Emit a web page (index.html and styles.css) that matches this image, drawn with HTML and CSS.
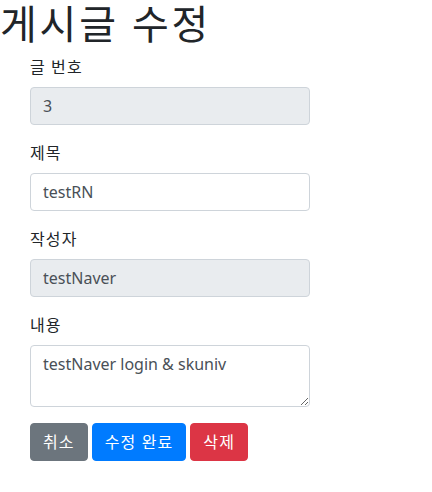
FILE: index.html
```html
<!DOCTYPE html>
<html lang="ko">
<head>
<meta charset="utf-8">
<link rel="stylesheet" href="styles.css">
</head>
<body>
<h1 class="title">게시글 수정</h1>
<form class="form">
  <div class="group">
    <label class="label">글 번호</label>
    <input class="control" type="text" value="3" disabled>
  </div>
  <div class="group">
    <label class="label">제목</label>
    <input class="control" type="text" value="testRN">
  </div>
  <div class="group">
    <label class="label">작성자</label>
    <input class="control" type="text" value="testNaver" disabled>
  </div>
  <div class="group">
    <label class="label">내용</label>
    <textarea class="control area" rows="2">testNaver login &amp; skuniv</textarea>
  </div>
  <div class="buttons">
    <button type="button" class="btn secondary">취소</button>
    <button type="button" class="btn primary">수정 완료</button>
    <button type="button" class="btn danger">삭제</button>
  </div>
</form>
</body>
</html>
```
FILE: styles.css
```css
body {
  margin: 0;
  font-family: "Noto Sans", "Noto Sans CJK KR", sans-serif;
  font-size: 16px;
  line-height: 1.5;
  color: #212529;
  background: #fff;
}
.title {
  margin: 0 0 7px;
  font-size: 40px;
  font-weight: 400;
  line-height: 1.2;
  letter-spacing: 0.07em;
}
.form {
  width: 280px;
  margin-left: 30px;
}
.group {
  margin-bottom: 16px;
  display: flex;
  flex-direction: column;
}
.label {
  margin-bottom: 8px;
  line-height: 24px;
  letter-spacing: 0.07em;
}
.control {
  box-sizing: border-box;
  width: 100%;
  height: 38px;
  padding: 6px 12px;
  font: inherit;
  font-size: 16px;
  line-height: 1.5;
  color: #495057;
  background: #fff;
  border: 1px solid #ced4da;
  border-radius: 4px;
  margin: 0;
}
.control:disabled {
  background: #e9ecef;
  opacity: 1;
  color: #495057;
}
.area {
  height: 62px;
  resize: vertical;
}
.buttons {
  display: flex;
  gap: 4px;
}
.btn {
  font: inherit;
  font-size: 16px;
  line-height: 1.5;
  letter-spacing: 0.07em;
  padding: 6px 12px;
  border: 1px solid transparent;
  border-radius: 4px;
  color: #fff;
  height: 38px;
}
.secondary { background: #6c757d; border-color: #6c757d; }
.primary { background: #007bff; border-color: #007bff; }
.danger { background: #dc3545; border-color: #dc3545; }
```
